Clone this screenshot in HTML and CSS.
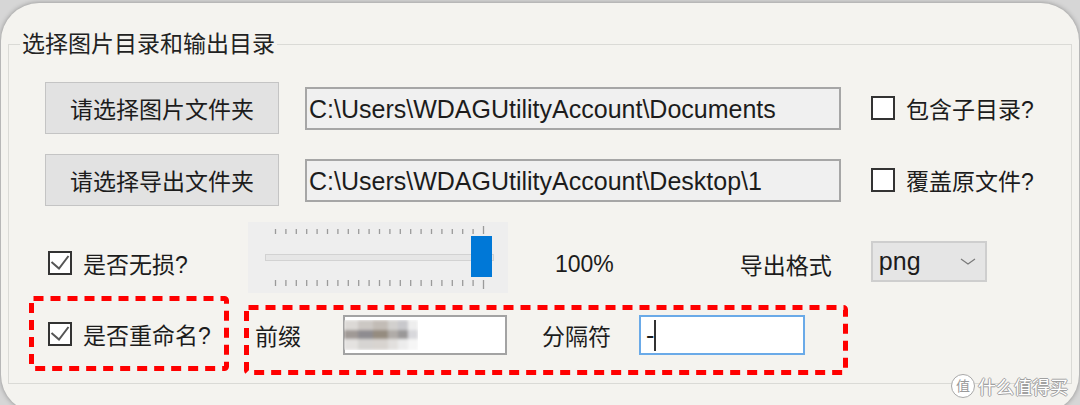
FILE: index.html
```html
<!DOCTYPE html>
<html lang="zh-CN">

<head>
  <meta charset="UTF-8">
  <meta name="viewport" content="width=device-width, initial-scale=1.0">
  <title>图片压缩设置</title>
  <link rel="stylesheet" href="styles.css">
</head>

<body>
  <div class="card">
    <fieldset class="group">
      <legend>选择图片目录和输出目录</legend>

      <!-- 输入目录 -->
      <div class="row row-dir">
        <button class="btn">请选择图片文件夹</button>
        <div class="path">C:\Users\WDAGUtilityAccount\Documents</div>
        <label class="check"><span class="box"></span>包含子目录?</label>
      </div>

      <!-- 输出目录 -->
      <div class="row row-dir">
        <button class="btn">请选择导出文件夹</button>
        <div class="path">C:\Users\WDAGUtilityAccount\Desktop\1</div>
        <label class="check"><span class="box"></span>覆盖原文件?</label>
      </div>

      <!-- 质量 / 格式 -->
      <div class="row row-quality">
        <label class="check check-lossless">
          <span class="box">
            <svg viewBox="0 0 20 20"><polyline points="1.5,9 9,15.5 18.5,3" /></svg>
          </span>是否无损?
        </label>
        <div class="slider">
          <svg viewBox="0 0 260 71" width="260" height="71">
            <path class="ticks" d="M27.5 7v5M37.9 7v5M48.3 7v5M58.7 7v5M69.1 7v5M79.5 7v5M89.9 7v5M100.3 7v5M110.7 7v5M121.1 7v5M131.5 7v5M141.9 7v5M152.3 7v5M162.7 7v5M173.1 7v5M183.5 7v5M193.9 7v5M204.3 7v5M214.7 7v5M225.1 7v5M235.5 4v8" />
            <path class="ticks" d="M27.5 58v6M37.9 58v6M48.3 58v6M58.7 58v6M69.1 58v6M79.5 58v6M89.9 58v6M100.3 58v6M110.7 58v6M121.1 58v6M131.5 58v6M141.9 58v6M152.3 58v6M162.7 58v6M173.1 58v6M183.5 58v6M193.9 58v6M204.3 58v6M214.7 58v6M225.1 58v6M235.5 58v9" />
            <rect class="track" x="17.5" y="32.5" width="228" height="6" />
            <rect class="thumb" x="223" y="14" width="21" height="41" />
          </svg>
        </div>
        <span class="percent">100%</span>
        <span class="format-label">导出格式</span>
        <div class="combo">
          <span>png</span>
          <svg viewBox="0 0 16 7" width="16" height="7"><polyline points="1,1 8,6 15,1" /></svg>
        </div>
      </div>

      <!-- 重命名 -->
      <div class="row row-rename">
        <div class="mark mark-check">
          <svg class="dash" viewBox="0 0 200 75"><rect x="2.5" y="2.5" width="195" height="70" rx="2" /></svg>
          <label class="check">
            <span class="box">
              <svg viewBox="0 0 20 20"><polyline points="1.5,9 9,15.5 18.5,3" /></svg>
            </span>是否重命名?
          </label>
        </div>
        <div class="mark mark-fields">
          <svg class="dash" viewBox="0 0 604 70"><rect x="2.5" y="2.5" width="599" height="65" rx="2" /></svg>
          <span class="field-label">前缀</span>
          <div class="input input-prefix">
            <svg class="mosaic" viewBox="0 0 74 30" width="74" height="30">
              <defs><filter id="soft"><feGaussianBlur stdDeviation="1.4" /></filter></defs>
              <g filter="url(#soft)">
                <rect x="0" y="0" width="14" height="10" fill="#dcd9d6" />
                <rect x="14" y="0" width="15" height="10" fill="#ccc8c4" />
                <rect x="29" y="0" width="15" height="10" fill="#c2bcb6" />
                <rect x="44" y="0" width="10" height="10" fill="#d2d0ce" />
                <rect x="54" y="0" width="10" height="10" fill="#c8c8cc" />
                <rect x="64" y="0" width="10" height="10" fill="#eeeeee" />
                <rect x="0" y="10" width="14" height="9" fill="#a09a96" />
                <rect x="14" y="10" width="15" height="9" fill="#8e8c90" />
                <rect x="29" y="10" width="15" height="9" fill="#958c80" />
                <rect x="44" y="10" width="10" height="9" fill="#b0aca8" />
                <rect x="54" y="10" width="10" height="9" fill="#9a9898" />
                <rect x="64" y="10" width="10" height="9" fill="#d8d8dc" />
                <rect x="0" y="19" width="14" height="11" fill="#e4e2e0" />
                <rect x="14" y="19" width="15" height="11" fill="#d6d4d2" />
                <rect x="29" y="19" width="15" height="11" fill="#d8d4d0" />
                <rect x="44" y="19" width="10" height="11" fill="#e2e0de" />
                <rect x="54" y="19" width="10" height="11" fill="#ececec" />
                <rect x="64" y="19" width="10" height="11" fill="#f6f6f6" />
              </g>
            </svg>
          </div>
          <span class="field-label field-sep">分隔符</span>
          <div class="input input-sep"><span class="sep-value">-</span><span class="caret"></span></div>
        </div>
      </div>
    </fieldset>

    <!-- 水印 -->
    <div class="watermark">
      <span class="wm-logo">值</span>
      <span class="wm-text">什么值得买</span>
    </div>
  </div>
</body>

</html>
```

FILE: styles.css
```css
/* 全局 */
* {
  box-sizing: border-box;
  margin: 0;
  padding: 0;
}

html,
body {
  background: #d6d6d6;
  overflow: hidden;
}

body {
  font-family: "Liberation Sans", "Noto Sans CJK SC", sans-serif;
  font-size: 23px;
  color: #1c1c1c;
}

/* 外层圆角卡片 */
.card {
  position: relative;
  width: 1078px;
  height: 410px;
  margin: 3px 0 0 1px;
  padding: 27px 7px 0 7px;
  background: #f4f3ef;
  border-radius: 38px;
  box-shadow: 0 0 5px rgba(0, 0, 0, 0.35);
}

/* 分组框 */
.group {
  height: 354px;
  border: 1px solid #dadad6;
  min-width: 0;
}

.group legend {
  margin-left: 11px;
  padding: 0 2px;
  line-height: 28px;
  color: #222;
}

.row {
  display: flex;
  align-items: center;
}

/* 目录行 */
.row-dir {
  height: 52px;
  margin-top: 20px;
}

.row-dir:first-of-type {
  margin-top: 24px;
}

.btn {
  width: 234px;
  height: 52px;
  margin-left: 36px;
  font: inherit;
  color: #1c1c1c;
  background: #e2e2e2;
  border: 1px solid #c4c4c4;
}

.path {
  width: 536px;
  height: 43px;
  margin-left: 26px;
  padding-left: 2px;
  font-size: 25px;
  line-height: 40px;
  background: #f0f0f0;
  border: 2px solid #a6a6a6;
  white-space: nowrap;
  overflow: hidden;
}

/* 复选框 */
.check {
  display: flex;
  align-items: center;
  gap: 11px;
  margin-left: 30px;
}

.box {
  width: 24px;
  height: 24px;
  background: #fff;
  border: 2px solid #333;
}

.box svg {
  display: block;
  width: 20px;
  height: 20px;
  fill: none;
  stroke: #555;
  stroke-width: 2;
}

/* 质量行 */
.row-quality {
  height: 74px;
  margin-top: 16px;
}

.check-lossless {
  width: 200px;
  margin: 7px 0 0 39px;
}

.slider {
  width: 260px;
  height: 71px;
  margin-bottom: 3px;
  background: #eeeeee;
}

.slider svg {
  display: block;
}

.slider .ticks {
  stroke: #9a9a9a;
  stroke-width: 1.3;
}

.slider .track {
  fill: #e6e6e6;
  stroke: #d2d2d2;
}

.slider .thumb {
  fill: #0078d7;
}

.percent {
  margin: 10px 0 0 47px;
}

.format-label {
  margin: 10px 0 0 126px;
}

.combo {
  display: flex;
  align-items: center;
  justify-content: space-between;
  width: 116px;
  height: 41px;
  margin: 4px 0 0 39px;
  padding: 0 9px 0 6px;
  font-size: 25px;
  background: #e5e5e5;
  border: 2px solid #cecece;
}

.combo svg {
  fill: none;
  stroke: #7a7a7a;
  stroke-width: 1.2;
}

/* 重命名行（红色虚线标注） */
.row-rename {
  align-items: flex-start;
}

.mark {
  position: relative;
  display: flex;
  align-items: center;
}

.mark .dash {
  position: absolute;
  top: 0;
  left: 0;
  width: 100%;
  height: 100%;
  fill: none;
  stroke: #ff0000;
  stroke-width: 5;
  stroke-dasharray: 10 7;
}

.mark-check {
  width: 200px;
  height: 75px;
  margin-left: 20px;
  padding-left: 19px;
}

.mark-check .check {
  margin-left: 0;
}

.mark-fields {
  width: 604px;
  height: 70px;
  margin: 9px 0 0 15px;
  padding: 0 0 10px 11px;
}

.input {
  display: flex;
  align-items: center;
  height: 40px;
  background: #fff;
}

.input-prefix {
  width: 164px;
  margin-left: 42px;
  border: 2px solid #a3a3a3;
}

.mosaic {
  display: block;
  margin-left: -1px;
}

.field-sep {
  margin-left: 35px;
}

.input-sep {
  width: 166px;
  margin-left: 28px;
  padding-left: 5px;
  border: 2px solid #6aaae8;
  font-size: 25px;
}

.sep-value {
  line-height: 1;
}

.caret {
  width: 2px;
  height: 31px;
  background: #333;
}

/* 右下角水印 */
.watermark {
  position: absolute;
  right: 11px;
  bottom: 14px;
  display: flex;
  align-items: center;
  gap: 3px;
  height: 26px;
  font-family: "Noto Sans CJK SC", sans-serif;
  color: #fff;
}

.wm-logo {
  width: 24px;
  height: 24px;
  border: 1.5px solid #a8a8a8;
  border-radius: 50%;
  background: #fff;
  color: #9a9a9a;
  font-size: 14px;
  line-height: 21px;
  text-align: center;
}

.wm-text {
  font-size: 18px;
  line-height: 26px;
  text-shadow: 1px 0 0 #a0a0a0, -1px 0 0 #a0a0a0, 0 1px 0 #a0a0a0, 0 -1px 0 #a0a0a0;
}
```
